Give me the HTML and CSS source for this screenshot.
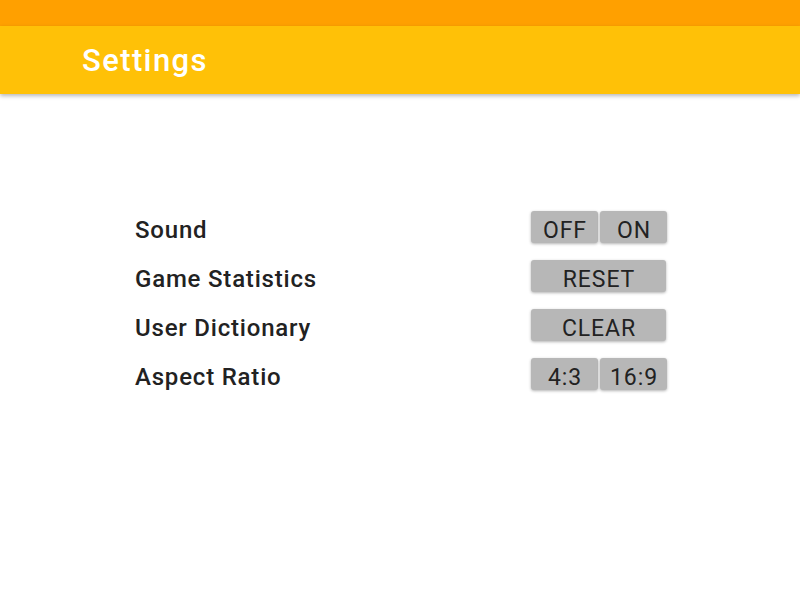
FILE: index.html
```html
<!DOCTYPE html>
<html>
<head>
<meta charset="utf-8">
<link rel="stylesheet" href="styles.css">
</head>
<body>
<div class="status"></div>
<header class="appbar"><h1 class="title">Settings</h1></header>
<main class="settings">
  <div class="row">
    <span class="label">Sound</span>
    <div class="btns"><button class="btn">OFF</button><button class="btn">ON</button></div>
  </div>
  <div class="row">
    <span class="label">Game Statistics</span>
    <div class="btns"><button class="btn wide">RESET</button></div>
  </div>
  <div class="row">
    <span class="label">User Dictionary</span>
    <div class="btns"><button class="btn wide">CLEAR</button></div>
  </div>
  <div class="row">
    <span class="label">Aspect Ratio</span>
    <div class="btns"><button class="btn">4:3</button><button class="btn">16:9</button></div>
  </div>
</main>
</body>
</html>
```
FILE: styles.css
```css
* { box-sizing: border-box; }
html, body { margin: 0; padding: 0; }
body {
  width: 800px;
  height: 600px;
  background: #fff;
  font-family: Roboto, "Noto Sans", sans-serif;
  overflow: hidden;
}
.status {
  height: 26px;
  background: #FFA000;
}
.appbar {
  height: 68px;
  background: #FFC107;
  box-shadow: 0 2px 4px rgba(0,0,0,0.28);
  display: flex;
  align-items: center;
  padding-left: 82px;
  position: relative;
}
.title {
  margin: 0;
  color: #fff;
  font-size: 31px;
  font-weight: 500;
  letter-spacing: 1.4px;
}
.settings {
  padding: 117px 0 0 135px;
  display: flex;
  flex-direction: column;
  gap: 17px;
}
.row {
  display: flex;
  align-items: center;
  height: 32px;
}
.label {
  width: 396px;
  font-size: 24px;
  font-weight: 500;
  color: #222;
  letter-spacing: 0.8px;
  padding-top: 6px;
}
.btns {
  display: flex;
  gap: 2px;
}
.btn {
  width: 67px;
  height: 32px;
  border: none;
  border-radius: 3px;
  background: #B7B7B7;
  box-shadow: 0 1px 3px rgba(0,0,0,0.3);
  font-family: Roboto, "Noto Sans", sans-serif;
  font-size: 23px;
  color: #222;
  letter-spacing: 0.9px;
  padding: 8px 0 0 1px;
  line-height: 24px;
}
.btn.wide { width: 135px; }
```
